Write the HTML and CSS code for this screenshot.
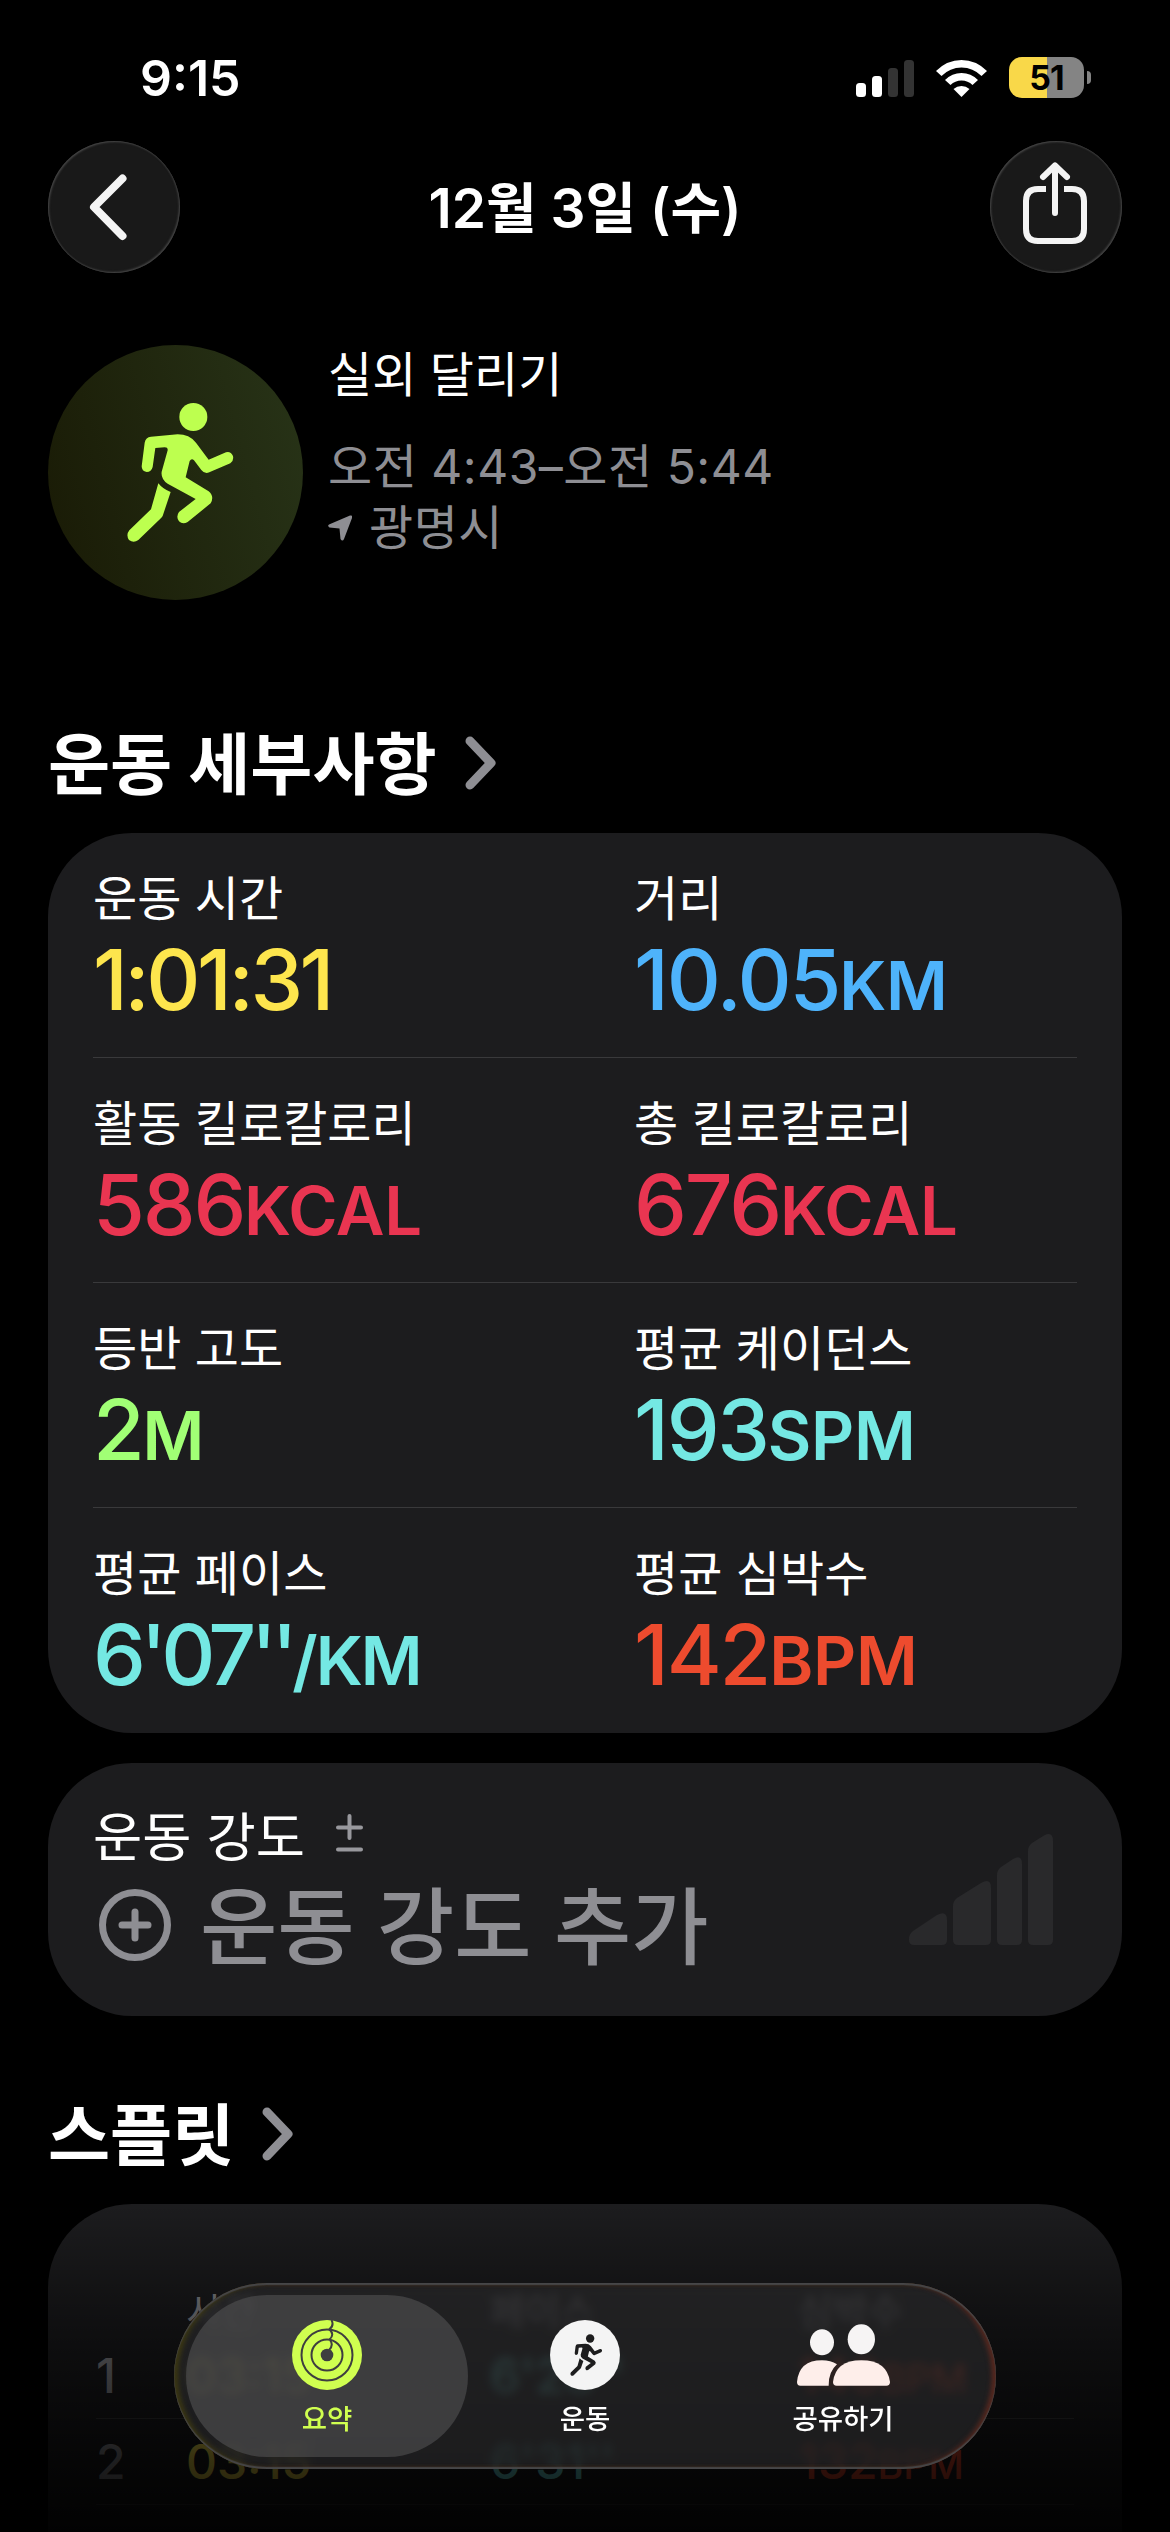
FILE: index.html
```
<!DOCTYPE html>
<html lang="ko">
<head>
    <meta charset="UTF-8">
    <meta name="viewport" content="width=device-width, initial-scale=1.0">
    <title>운동 요약</title>
    <link rel="stylesheet" href="styles.css">
</head>
<body>
    <svg width="0" height="0" class="defs">
        <symbol id="runner" viewBox="80 60 326 428">
            <circle cx="282" cy="108" r="42"/>
            <path d="M155 167 L235 160 Q270 160 290 185 L328 236 L380 214 Q394 210 401 225 Q404 240 393 247 L330 274 Q316 280 306 267 L284 238 Q277 230 271 240 L259 289 L328 331 Q346 346 334 367 L265 423 Q250 432 239 421 Q229 407 239 393 L289 354 L205 308 Q184 294 187 272 L205 208 Q206 199 196 199 L168 201 L160 258 Q156 273 142 273 Q127 271 127 256 L136 185 Q139 169 155 167Z"/>
            <path d="M177 307 Q190 324 214 333 L190 405 Q187 410 183 413 L117 477 Q103 488 89 477 Q79 462 90 448 L155 385Z"/>
        </symbol>
        <symbol id="chevron" viewBox="0 0 32 54">
            <path d="M5 5 L26 27 L5 49" fill="none" stroke="currentColor" stroke-width="9" stroke-linecap="round" stroke-linejoin="round"/>
        </symbol>
    </svg>

    <header class="status-bar">
        <span class="clock">9:15</span>
        <div class="status-icons">
            <svg width="58" height="38" viewBox="0 0 58 38" fill="#fff">
                <rect x="0" y="24" width="10" height="14" rx="3.5"/>
                <rect x="16" y="17" width="10" height="21" rx="3.5"/>
                <rect x="32" y="9" width="10" height="29" rx="3.5" fill="#333"/>
                <rect x="48" y="1" width="10" height="37" rx="3.5" fill="#333"/>
            </svg>
            <svg width="51" height="38" viewBox="0 0 51 38" fill="#fff">
                <path d="M0 12 Q11 1 25.500 1 Q40 1 51 12 L45.500 17 Q37 8.500 25.500 8.500 Q14 8.500 5.500 17Z"/>
                <path d="M9 21 Q16 14 25.500 14 Q35 14 42 21 L36.500 26 Q32 21.500 25.500 21.500 Q19 21.500 14.500 26Z"/>
                <path d="M17.500 30 Q21 27 25.500 27 Q30 27 33.500 30 L25.500 38Z"/>
            </svg>
            <div class="battery">
                <span class="battery-level">51</span>
                <span class="battery-cap"></span>
            </div>
        </div>
    </header>

    <nav class="nav-bar">
        <button class="round-btn">
            <svg width="132" height="132" viewBox="0 0 132 132"><path d="M74.500 37.500 L46 66 L74.500 95" fill="none" stroke="#f4f4f4" stroke-width="8" stroke-linecap="round" stroke-linejoin="round"/></svg>
        </button>
        <h1>12월 3일 (수)</h1>
        <button class="round-btn">
            <svg width="132" height="132" viewBox="0 0 132 132" fill="none" stroke="#f4f4f4" stroke-width="6">
                <path d="M56 48 H48 Q36 48 36 60 V88 Q36 100 48 100 H82 Q94 100 94 88 V60 Q94 48 82 48 H74"/>
                <path d="M65 72 V26 M53 36 L65 24.500 L77 36" stroke-linecap="round" stroke-linejoin="round"/>
            </svg>
        </button>
    </nav>

    <section class="workout">
        <div class="workout-icon">
            <svg width="108.670" height="142.670" fill="#bdff4f"><use href="#runner"/></svg>
        </div>
        <div class="workout-info">
            <p class="workout-name">실외 달리기</p>
            <p class="workout-time">오전 4:43–오전 5:44</p>
            <p class="workout-place">
                <svg width="24" height="26" viewBox="0 0 24 26"><path d="M22 .500 Q25 0 24 3 L16 24 Q14.500 27 12.500 24 L11.500 13.500 L1.500 12.500 Q-1 11 1 9.500Z" fill="#8e8e93"/></svg>
                <span>광명시</span>
            </p>
        </div>
    </section>

    <h2 class="details-title"><span>운동 세부사항</span> <svg class="chevron" width="32" height="54"><use href="#chevron"/></svg></h2>

    <section class="card stats">
        <div class="stat-row">
            <div class="stat">
                <p class="label">운동 시간</p>
                <p class="value duration yellow">1:01:31</p>
            </div>
            <div class="stat">
                <p class="label">거리</p>
                <p class="value blue">10.05<span>KM</span></p>
            </div>
        </div>
        <div class="stat-row">
            <div class="stat">
                <p class="label">활동 킬로칼로리</p>
                <p class="value pink">586<span>KCAL</span></p>
            </div>
            <div class="stat">
                <p class="label">총 킬로칼로리</p>
                <p class="value pink">676<span>KCAL</span></p>
            </div>
        </div>
        <div class="stat-row">
            <div class="stat">
                <p class="label">등반 고도</p>
                <p class="value green">2<span>M</span></p>
            </div>
            <div class="stat">
                <p class="label">평균 케이던스</p>
                <p class="value cyan">193<span>SPM</span></p>
            </div>
        </div>
        <div class="stat-row">
            <div class="stat">
                <p class="label">평균 페이스</p>
                <p class="value pace cyan">6'07''<span>/KM</span></p>
            </div>
            <div class="stat">
                <p class="label">평균 심박수</p>
                <p class="value red">142<span>BPM</span></p>
            </div>
        </div>
    </section>

    <section class="card effort">
        <div>
            <p class="effort-title">운동 강도
                <svg width="27" height="38" viewBox="0 0 27 38" stroke="#98989d" stroke-width="4" stroke-linecap="round"><path d="M2 13.500 H25 M13.500 2 V24 M2 35.500 H25"/></svg>
            </p>
            <p class="effort-add">
                <svg width="72" height="72" viewBox="0 0 72 72" fill="none" stroke="#8e8e93" stroke-width="7"><circle cx="36" cy="36" r="32.500"/><path d="M36 23 V49 M23 36 H49" stroke-linecap="round"/></svg>
                <span>운동 강도 추가</span>
            </p>
        </div>
        <svg class="effort-bars" width="144" height="111" viewBox="0 0 144 111" fill="#29292b">
            <path d="M0 105 Q0 100 4 97 L28 81 Q38 76 38 86 V106 Q38 111 33 111 H5 Q0 111 0 106Z"/>
            <path d="M44 72 Q44 67 48 64 L72 49 Q82 43 82 54 V106 Q82 111 77 111 H49 Q44 111 44 106Z"/>
            <path d="M88 41 Q88 36 92 33 L104 25 Q113 20 113 30 V106 Q113 111 108 111 H93 Q88 111 88 106Z"/>
            <path d="M119 17 Q119 12 123 9 L135 1.500 Q144 -3 144 7 V106 Q144 111 139 111 H124 Q119 111 119 106Z"/>
        </svg>
    </section>

    <h2 class="splits-title"><span>스플릿</span> <svg class="chevron" width="32" height="54"><use href="#chevron"/></svg></h2>

    <section class="card splits">
        <div class="split-head"><span></span><span>시간</span><span>페이스</span><span>심박수</span></div>
        <div class="split-row">
            <span>1</span><span class="yellow">03:15</span><span class="cyan">6'28''</span><span class="red">140<small>BPM</small></span>
        </div>
        <div class="split-row">
            <span>2</span><span class="yellow">03:15</span><span class="cyan">6'31''</span><span class="red">132<small>BPM</small></span>
        </div>
    </section>

    <div class="bottom-fade"></div>

    <nav class="tab-bar">
        <a class="tab active">
            <svg width="70" height="70" viewBox="0 0 70 70">
                <circle cx="35" cy="35" r="35" fill="#d0ff50"/>
                <circle cx="35" cy="35" r="6.300" fill="#3e3e40"/>
                <g fill="none" stroke="#3e3e40" stroke-width="2">
                    <circle cx="35" cy="35" r="25.500"/>
                    <circle cx="35" cy="35" r="15.500"/>
                    <path d="M39.500 0 Q42.500 6 37 9.500 M37.500 9.500 Q43 14.500 37.500 19.500 M38 20 Q42 25 37 30"/>
                </g>
            </svg>
            <span>요약</span>
        </a>
        <a class="tab">
            <svg width="70" height="70" viewBox="0 0 70 70">
                <circle cx="35" cy="35" r="35" fill="#f4f4f4"/>
                <use href="#runner" x="20" y="13.500" width="32.500" height="43" fill="#1d1d1e"/>
            </svg>
            <span>운동</span>
        </a>
        <a class="tab">
            <svg width="93" height="70" viewBox="714 149 279 210" fill="#f6f4f4">
                <ellipse cx="789" cy="216" rx="36" ry="39"/>
                <ellipse cx="907" cy="207" rx="41" ry="45"/>
                <path d="M714 335 Q720 270 789 270 Q815 270 834 282 Q808 305 809 346 H724 Q714 346 714 335Z" fill="#feeeea"/>
                <path d="M822 335 Q830 270 907 270 Q984 270 993 335 Q993 346 982 346 H833 Q822 346 822 335Z" fill="#feeeea"/>
            </svg>
            <span>공유하기</span>
        </a>
    </nav>
</body>
</html>
```
FILE: styles.css
```
* {
    box-sizing: border-box;
}
body {
    position: relative;
    width: 1170px;
    height: 2532px;
    margin: 0;
    padding: 0 48px;
    overflow: hidden;
    background-color: #000;
    color: #fff;
    font-family: Inter, "Noto Sans CJK KR", sans-serif;
}
h1, h2, p {
    margin: 0;
    white-space: nowrap;
}
svg {
    display: block;
    flex: none;
}
.defs {
    position: absolute;
}

/* Status bar */
.status-bar {
    display: flex;
    justify-content: space-between;
    height: 141px;
    padding: 57px 31px 0 92px;
}
.clock {
    height: 41px;
    font-size: 50px;
    font-weight: 600;
    line-height: 43px;
}
.status-icons {
    display: flex;
    gap: 22px;
    align-items: center;
    height: 41px;
}
.battery {
    display: flex;
    align-items: center;
    gap: 3px;
}
.battery-level {
    width: 75px;
    height: 41px;
    border-radius: 13px;
    background: linear-gradient(90deg, #f9d849 51%, #848484 51%);
    color: #000;
    font-size: 34px;
    font-weight: 700;
    line-height: 42px;
    text-align: center;
    letter-spacing: -1px;
}
.battery-cap {
    width: 4px;
    height: 13px;
    border-radius: 0 4px 4px 0;
    background-color: #848484;
}

/* Navigation */
.nav-bar {
    display: flex;
    justify-content: space-between;
    align-items: center;
    height: 132px;
}
.nav-bar h1 {
    padding-bottom: 7px;
    font-size: 55px;
    font-weight: 600;
}
.round-btn {
    width: 132px;
    height: 132px;
    padding: 0;
    border: none;
    border-radius: 50%;
    background-color: #191919;
    box-shadow: inset 1px 1px 2px #484848, inset -1px -1px 2px #484848;
}

/* Workout summary */
.workout {
    display: flex;
    gap: 25px;
    height: 255px;
    margin-top: 72px;
}
.workout-icon {
    display: flex;
    justify-content: center;
    align-items: center;
    width: 255px;
    height: 255px;
    padding: 0 0 1px 10px;
    border-radius: 50%;
    background: linear-gradient(75deg, #191a05, #283418);
}
.workout-info {
    font-size: 48px;
    color: #8e8e93;
}
.workout-name {
    height: 91px;
    line-height: 60px;
    color: #fff;
}
.workout-time {
    height: 61px;
    line-height: 61px;
    letter-spacing: 0.5px;
}
.workout-place {
    display: flex;
    align-items: center;
    gap: 17px;
    height: 61px;
    letter-spacing: 0.5px;
}
.workout-place span {
    padding-bottom: 7px;
}

/* Section titles */
h2 {
    display: flex;
    align-items: center;
    gap: 28px;
    height: 90px;
    font-size: 67.500px;
    font-weight: 700;
}
h2 span {
    padding-bottom: 8px;
}
.chevron {
    color: #8e8e93;
}
.details-title {
    margin-top: 118px;
}
.splits-title {
    margin-top: 73px;
}

/* Cards */
.card {
    padding: 0 45px;
    border-radius: 84px;
    background-color: #1c1c1e;
}
.stats {
    height: 900px;
    margin-top: 25px;
}
.stat-row {
    display: grid;
    grid-template-columns: 541px 1fr;
    height: 225px;
    padding-top: 36px;
    border-bottom: 1px solid #39393b;
}
.stat-row:last-child {
    border-bottom: none;
}
.label {
    height: 61px;
    font-size: 48px;
    line-height: 60px;
}
.value {
    height: 100px;
    font-size: 84px;
    font-weight: 500;
    line-height: 100px;
    letter-spacing: -2.200px;
}
.value span {
    font-size: 67px;
    font-weight: 600;
    letter-spacing: -0.300px;
}
.duration {
    letter-spacing: -3.500px;
}
.pace {
    letter-spacing: -5.500px;
}
.pace span {
    letter-spacing: -2px;
}
.yellow {
    color: #fde54d;
}
.blue {
    color: #4eb3fb;
}
.pink {
    color: #e93551;
}
.green {
    color: #a1ff75;
}
.cyan {
    color: #74e8e3;
}
.red {
    color: #ed4b2e;
}

/* Effort */
.effort {
    display: flex;
    justify-content: space-between;
    height: 253px;
    margin-top: 30px;
    padding-right: 69px;
}
.effort-title {
    display: flex;
    align-items: center;
    gap: 31px;
    height: 70px;
    margin-top: 35px;
    font-size: 53.500px;
}
.effort-add {
    display: flex;
    align-items: center;
    gap: 29px;
    height: 100px;
    margin-top: 7px;
    padding-left: 6px;
    color: #8e8e93;
    font-size: 84px;
    font-weight: 500;
}
.effort-add span {
    padding-bottom: 8px;
}
.effort-bars {
    margin-top: 71px;
}

/* Splits */
.splits {
    height: 420px;
    margin-top: 25px;
    color: #8e8e93;
}
.split-head, .split-row {
    display: grid;
    grid-template-columns: 90px 304px 308px 1fr;
    align-items: center;
    margin: 0 3px;
}
.split-head {
    height: 129px;
    padding-top: 85px;
    font-size: 38px;
    line-height: 40px;
}
.split-row {
    height: 86px;
    border-bottom: 1px solid #39393b;
    font-size: 48px;
    font-weight: 500;
}
.split-row small {
    font-size: 39px;
}
.bottom-fade {
    position: absolute;
    left: 0;
    right: 0;
    bottom: 0;
    height: 328px;
    background: linear-gradient(rgba(0,0,0,0), rgba(0,0,0,0.35) 28%, rgba(0,0,0,0.6) 52%, rgba(0,0,0,0.79) 78%, rgba(0,0,0,0.92));
}

/* Tab bar */
.tab-bar {
    position: absolute;
    left: 174px;
    bottom: 63px;
    display: flex;
    width: 822px;
    height: 186px;
    padding: 12px;
    border-radius: 93px;
    background-color: rgba(40,40,41,0.68);
    backdrop-filter: blur(5px);
    box-shadow: inset 0 2px 1px #464648, inset 0 -2px 1px #464648, inset 4px 0 5px #3d3913, inset -4px 0 5px #5c2a20;
}
.tab {
    display: flex;
    flex-direction: column;
    align-items: center;
    gap: 9px;
    width: 282px;
    height: 162px;
    margin-right: -24px;
    flex: none;
    padding-top: 25px;
    border-radius: 81px;
    font-size: 27.500px;
    font-weight: 500;
    line-height: 40px;
}
.tab.active {
    background-color: rgba(80,80,82,0.62);
    color: #d0ff50;
}
```
